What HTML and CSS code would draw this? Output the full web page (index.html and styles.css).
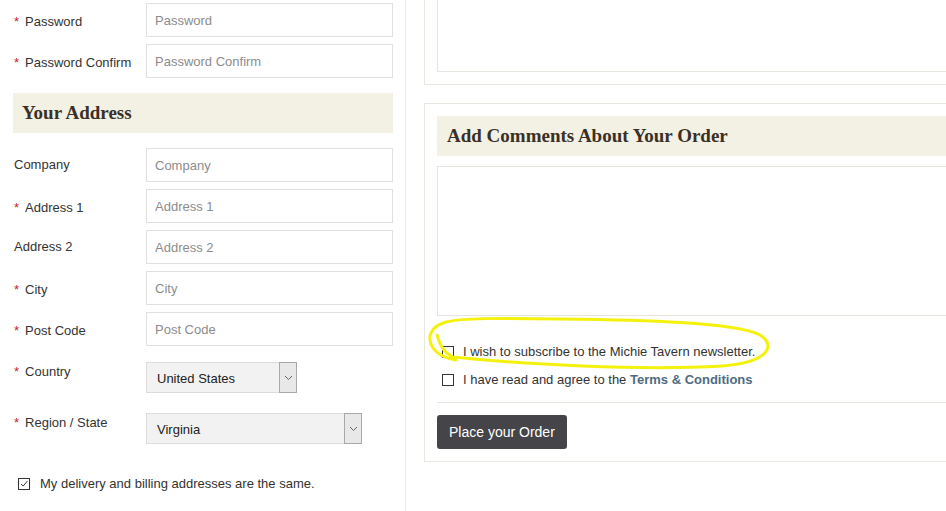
FILE: index.html
```html
<!DOCTYPE html>
<html lang="en">
<head>
  <meta charset="UTF-8" />
  <title>Checkout</title>
  <link rel="stylesheet" href="styles.css">
</head>
<body>

  <div class="page">

    <!-- Left column: account + address -->
    <div class="left-col">
      <div class="row">
        <label class="req"><span class="star">*</span>Password</label>
        <input type="password" placeholder="Password" />
      </div>
      <div class="row">
        <label class="req"><span class="star">*</span>Password Confirm</label>
        <input type="password" placeholder="Password Confirm" />
      </div>

      <h2 class="section-head">Your Address</h2>

      <div class="row">
        <label>Company</label>
        <input type="text" placeholder="Company" />
      </div>
      <div class="row">
        <label class="req"><span class="star">*</span>Address 1</label>
        <input type="text" placeholder="Address 1" />
      </div>
      <div class="row">
        <label>Address 2</label>
        <input type="text" placeholder="Address 2" />
      </div>
      <div class="row">
        <label class="req"><span class="star">*</span>City</label>
        <input type="text" placeholder="City" />
      </div>
      <div class="row">
        <label class="req"><span class="star">*</span>Post Code</label>
        <input type="text" placeholder="Post Code" />
      </div>

      <div class="row select-row">
        <label><span class="star">*</span>Country</label>
        <div class="select country">
          <span class="select-text">United States</span>
          <span class="select-arrow">
            <svg width="9" height="6" viewBox="0 0 9 6"><path d="M1 1 L4.5 4.5 L8 1" fill="none" stroke="#666" stroke-width="1"/></svg>
          </span>
        </div>
      </div>
      <div class="row select-row region-row">
        <label><span class="star">*</span>Region / State</label>
        <div class="select region">
          <span class="select-text">Virginia</span>
          <span class="select-arrow">
            <svg width="9" height="6" viewBox="0 0 9 6"><path d="M1 1 L4.5 4.5 L8 1" fill="none" stroke="#666" stroke-width="1"/></svg>
          </span>
        </div>
      </div>

      <div class="check-row same-address">
        <span class="box">
          <svg width="12" height="12" viewBox="0 0 12 12"><path d="M2.5 6 L5 8.5 L10 2.5" fill="none" stroke="#333" stroke-width="1.2"/></svg>
        </span>
        My delivery and billing addresses are the same.
      </div>
    </div>

    <!-- Right column: comments + order -->
    <div class="right-col">
      <div class="panel panel-cut">
        <textarea class="comments cut"></textarea>
      </div>

      <div class="panel">
        <h2 class="section-head">Add Comments About Your Order</h2>
        <textarea class="comments"></textarea>

        <div class="check-row newsletter">
          <span class="box"></span>
          I wish to subscribe to the Michie Tavern newsletter.
        </div>
        <div class="check-row terms">
          <span class="box"></span>
          I have read and agree to the&nbsp;<a href="#">Terms &amp; Conditions</a>
        </div>

        <div class="order-bar">
          <button>Place your Order</button>
        </div>
      </div>
    </div>
  </div>

  <!-- yellow marker scribble from the screenshot -->
  <svg class="scribble" width="946" height="511" viewBox="0 0 946 511">
    <path d="M437 335 C440 345 443 352 453 357 C520 364 640 371 722 366 C770 362 776 345 760 335 C735 322 640 320 560 319 C500 318 462 318 446 322 C431 326 426 337 433 348 C437 354 444 358 456 360"
          fill="none" stroke="#f4f20c" stroke-width="3" stroke-linecap="round" stroke-linejoin="round"/>
  </svg>

</body>
</html>
```

FILE: styles.css
```css
* { box-sizing: border-box; margin: 0; padding: 0; }
body {
  background: #fff;
  font-family: "Liberation Sans", Arial, sans-serif;
  font-size: 13px;
  color: #333;
  overflow: hidden;
  width: 946px;
  height: 511px;
}
.page {
  display: flex;
  align-items: stretch;
  height: 511px;
}

/* left column */
.left-col {
  width: 406px;
  flex: none;
  padding: 3px 12px 0 13px;
  border-right: 1px solid #ebe9e2;
}
.row {
  display: flex;
  margin-bottom: 7px;
}
.row label {
  width: 133px;
  flex: none;
  padding: 9px 0 0 1px;
  line-height: 16px;
}
.row label.req { padding-top: 11px; }
.star {
  color: #c4232b;
  margin-right: 6px;
}
.row input {
  width: 247px;
  height: 34px;
  border: 1px solid #e0e0e0;
  padding: 0 8px;
  font-family: inherit;
  font-size: 13px;
  color: #333;
  outline: none;
}
.row input::placeholder { color: #8c8c8c; }
.row:nth-child(2) { margin-bottom: 15px; }

.section-head {
  background: #f3f0e4;
  height: 40px;
  line-height: 40px;
  padding-left: 9px;
  font-family: "Liberation Serif", "DejaVu Serif", serif;
  font-weight: bold;
  font-size: 19px;
  color: #3a3027;
}
.left-col .section-head { margin-bottom: 15px; }

.select-row { margin-top: 16px; margin-bottom: 20px; }
.select-row label { padding-top: 2px; }
.region-row { margin-bottom: 0; }
.select {
  display: flex;
  height: 31px;
  background: #f2f2f2;
  border: 1px solid #dcdcdc;
  color: #222;
}
.select.country { width: 151px; }
.select.region { width: 216px; }
.select-text {
  flex: 1;
  padding: 8px 0 0 10px;
}
.select-arrow {
  width: 18px;
  display: flex;
  align-items: center;
  justify-content: center;
  background: #e8e8e8;
  border: 1px solid #a9a9a9;
  margin: -1px -1px -1px 0;
}

.check-row {
  display: flex;
  align-items: center;
  line-height: 16px;
}
.box {
  width: 12px;
  height: 12px;
  border: 1px solid #333;
  background: #fff;
  margin-right: 9px;
  flex: none;
  display: flex;
  align-items: center;
  justify-content: center;
}
.box svg { display: block; }
.same-address {
  margin-top: 32px;
  padding-left: 5px;
  color: #333;
}
.same-address .box { margin-right: 10px; }

/* right column */
.right-col {
  flex: none;
  width: 560px;
  padding-left: 18px;
}
.panel {
  border: 1px solid #e9e7e0;
  border-right: none;
  padding: 12px 0 12px 12px;
  margin-bottom: 18px;
}
.panel-cut {
  border-top: none;
  padding-top: 0;
}
.comments {
  display: block;
  width: 100%;
  height: 150px;
  border: 1px solid #e6e4dd;
  resize: none;
  outline: none;
  font-family: inherit;
}
.comments.cut {
  height: 72px;
  border-top: none;
}
.panel .section-head {
  padding-left: 10px;
  margin-bottom: 10px;
}
.newsletter {
  margin-top: 28px;
  padding-left: 5px;
}
.terms {
  margin-top: 12px;
  padding-left: 5px;
}
.terms a {
  color: #4d6c82;
  font-weight: bold;
  text-decoration: none;
}
.order-bar {
  margin-top: 14px;
  border-top: 1px solid #e6e4dd;
  padding-top: 12px;
}
.order-bar button {
  background: #444449;
  color: #fff;
  border: none;
  border-radius: 3px;
  height: 34px;
  padding: 0 12px;
  font-family: inherit;
  font-size: 14px;
}

.scribble {
  position: absolute;
  left: 0;
  top: 0;
  pointer-events: none;
}
```
